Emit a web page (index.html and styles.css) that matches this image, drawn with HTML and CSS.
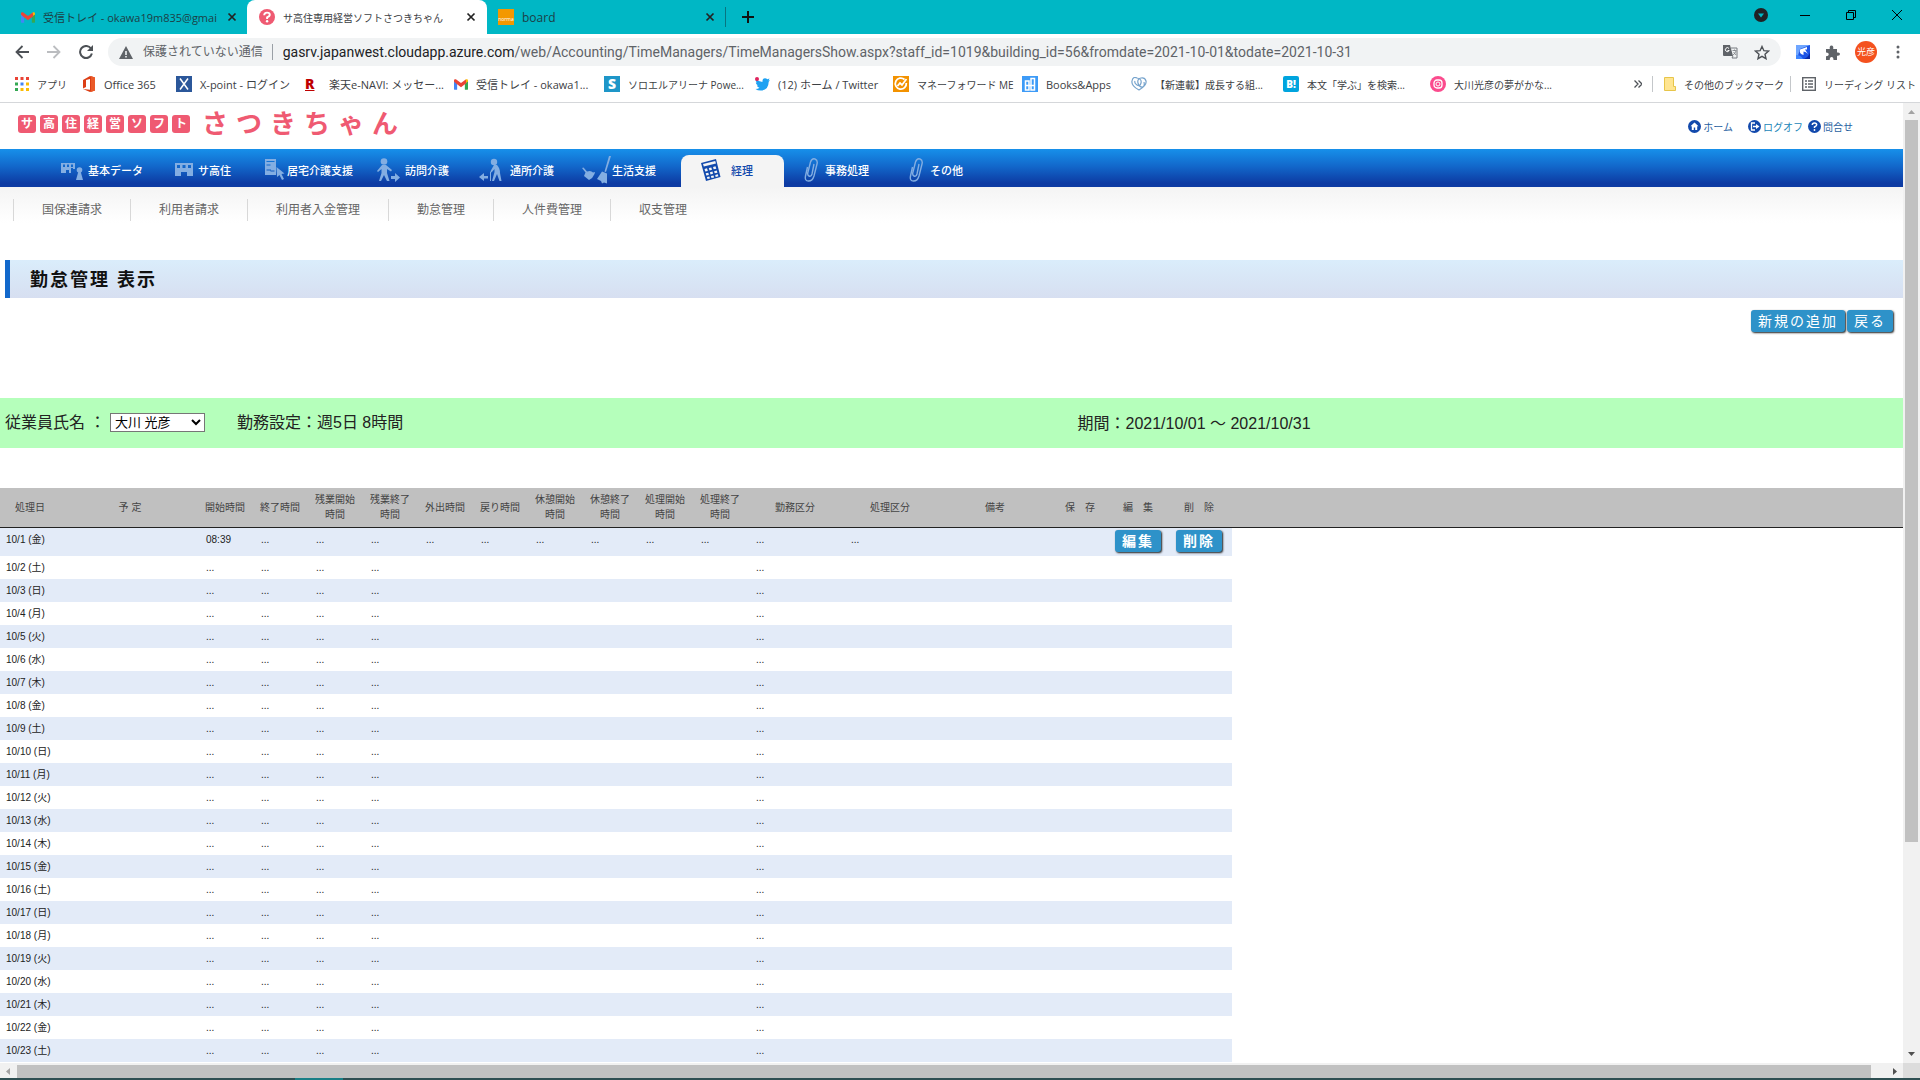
FILE: index.html
```html
<!DOCTYPE html>
<html lang="ja">
<head>
<meta charset="utf-8">
<title>サ高住専用経営ソフトさつきちゃん</title>
<link rel="stylesheet" href="styles.css">
</head>
<body>
<svg class="defs" width="0" height="0" aria-hidden="true">
  <defs>
    <symbol id="gmail" viewBox="0 0 16 12"><path d="M0 1.5V11a1 1 0 0 0 1 1h2.6V5z" fill="#4285f4"/><path d="M16 1.5V11a1 1 0 0 1-1 1h-2.6V5z" fill="#34a853"/><path d="M12.400 5V1l1-.7C14.600-.5 16 .2 16 1.500v1z" fill="#fbbc04"/><path d="M0 2.500v-1C0 .2 1.400-.5 2.600.3L8 4.300l5.400-4L14 4.500 8 9 2 4.500z" fill="#ea4335"/></symbol>
    <symbol id="cross" viewBox="0 0 10 10"><path d="M1.500 1.500l7 7m0-7l-7 7" stroke="currentColor" stroke-width="1.700" fill="none"/></symbol>
    <symbol id="building" viewBox="0 0 18 13"><path fill-rule="evenodd" d="M0 0h18v13h-6V9H6v4H0zM2 2v3h3V2zm5.500 0v3h3V2zM13 2v3h3V2z"/></symbol>
    <symbol id="clip" viewBox="0 0 14 24"><path d="M10 6L8 16q-1 3-3 2t-1-4L6.500 4q1.500-4 4.500-3 3 1 2 5l-3 12q-1.500 5-5.500 5T1.500 18L3.500 9" fill="none" stroke="currentColor" stroke-width="1.400"/></symbol>
  </defs>
</svg>

<header class="browser">
  <div class="tabs">
    <div class="tab"><svg width="14" height="11"><use href="#gmail"/></svg><span class="tab-title">受信トレイ - okawa19m835@gmai</span><button class="icon-btn" aria-label="タブを閉じる"><svg width="10" height="10"><use href="#cross"/></svg></button></div>
    <div class="tab tab-active"><svg width="16" height="16" viewBox="0 0 16 16"><circle cx="8" cy="8" r="8" fill="#ef5a72"/><path d="M5.200 6.200Q5.200 3.600 8 3.600t2.800 2.200Q10.800 7.300 8.100 8.300V10" fill="none" stroke="#fff" stroke-width="1.900"/><circle cx="8.100" cy="12.300" r="1.200" fill="#fff"/></svg><span class="tab-title kana">サ高住専用経営ソフトさつきちゃん</span><button class="icon-btn" aria-label="タブを閉じる"><svg width="10" height="10"><use href="#cross"/></svg></button></div>
    <div class="tab tab-last"><span class="norma">norma</span><span class="tab-title">board</span><button class="icon-btn" aria-label="タブを閉じる"><svg width="10" height="10"><use href="#cross"/></svg></button></div>
    <button class="icon-btn new-tab" aria-label="新しいタブ"><svg width="14" height="14" viewBox="0 0 14 14"><path d="M7 1v12M1 7h12" stroke="#111" stroke-width="2"/></svg></button>
    <div class="window-controls">
      <svg width="14" height="14" viewBox="0 0 14 14"><circle cx="7" cy="7" r="7" fill="#202124"/><path d="M4 5.500h6L7 9.500z" fill="#00b7c5"/></svg>
      <button class="icon-btn" aria-label="最小化"><svg width="10" height="10" viewBox="0 0 10 10"><path d="M0 5.500h10" stroke="#000"/></svg></button>
      <button class="icon-btn" aria-label="元に戻す"><svg width="10" height="10" viewBox="0 0 10 10"><path d="M.5 2.500h7v7h-7zM2.500 2.500v-2h7v7h-2" fill="none" stroke="#000"/></svg></button>
      <button class="icon-btn" aria-label="閉じる"><svg width="10" height="10" viewBox="0 0 10 10"><path d="M0 0l10 10M10 0L0 10" stroke="#000"/></svg></button>
    </div>
  </div>

  <div class="toolbar">
    <div class="nav-buttons">
      <button class="icon-btn" aria-label="戻る"><svg width="14" height="14" viewBox="0 0 14 14"><path d="M14 7H1.500M7.500 1L1.500 7l6 6" fill="none" stroke="#4d5156" stroke-width="1.800"/></svg></button>
      <button class="icon-btn" aria-label="進む"><svg width="14" height="14" viewBox="0 0 14 14"><path d="M0 7h12.500M6.500 1l6 6-6 6" fill="none" stroke="#bbbdc0" stroke-width="1.800"/></svg></button>
      <button class="icon-btn" aria-label="再読み込み"><svg width="14" height="14" viewBox="0 0 14 14"><path d="M12 3.500A6 6 0 1 0 12.900 8.500" fill="none" stroke="#4d5156" stroke-width="2"/><path d="M14 0v6H8z" fill="#4d5156"/></svg></button>
    </div>
    <div class="omnibox">
      <svg width="14" height="13" viewBox="0 0 14 13"><path fill-rule="evenodd" d="M7 0l7 13H0zM6.200 5v4h1.600V5zm0 5v1.600h1.600V10z" fill="#5f6368"/></svg>
      <span class="insecure">保護されていない通信</span>
      <span class="url"><b>gasrv.japanwest.cloudapp.azure.com</b>/web/Accounting/TimeManagers/TimeManagersShow.aspx?staff_id=1019&amp;building_id=56&amp;fromdate=2021-10-01&amp;todate=2021-10-31</span>
      <svg width="15" height="14" viewBox="0 0 15 14"><path d="M0 0h7l3 11H1q-1 0-1-1z" fill="#5f6368"/><path d="M8 3h6v10H9M9 13l1-2" fill="none" stroke="#777b80"/><path d="M9.500 5.500h4M11.500 4.500v1M13 6q-1 3-3 4M10.500 7l2.500 3" fill="none" stroke="#777b80" stroke-width=".8"/><path d="M6 3.500A2 2 0 1 0 6.200 5.500H4.500" fill="none" stroke="#fff"/></svg>
      <svg width="16" height="15" viewBox="0 0 16 15"><path d="M8 1.500l1.900 4.200 4.600.4L11 9.200l1 4.500-4-2.400-4 2.400 1-4.500L1.500 6.100l4.600-.4z" fill="none" stroke="#4d5156" stroke-width="1.400"/></svg>
    </div>
    <div class="extensions">
      <svg width="14" height="14" viewBox="0 0 14 14"><path d="M0 0h14v14H0z" fill="#1d55e6"/><path d="M0 0h14L4 4 1 14H0z" fill="#6fa6ff"/><path d="M0 10q5 0 7 4H0z" fill="#3f86ff"/><path d="M14 7v7H8q5-2 6-7z" fill="#0a2aa8"/><path d="M4 4.500L11 2v2.500H9L12 9q-2-2.500-4.500-2.500v3.500Q3 9 4 4.500z" fill="#fff"/></svg>
      <svg width="15" height="15" viewBox="0 0 15 15"><path d="M1 4h3.800q-.6-3.500 1.700-3.500T8.200 4H12v3.500q3-.5 3 1.600t-3 1.700V15H8.500q0-3-1.900-3t-1.900 3H1v-3.800q2.800 0 2.800-1.900T1 7.500z" fill="#5f6368"/></svg>
      <span class="avatar">光彦</span>
      <svg width="4" height="16" viewBox="0 0 4 16"><g fill="#5f6368"><circle cx="2" cy="3" r="1.500"/><circle cx="2" cy="8" r="1.500"/><circle cx="2" cy="13" r="1.500"/></g></svg>
    </div>
  </div>

  <nav class="bookmarks" aria-label="ブックマーク">
    <a href="#"><svg width="14" height="14" viewBox="0 0 14 14"><path d="M0 0h3v3H0zM5.500 0h3v3h-3zM11 0h3v3h-3z" fill="#ea4335"/><path d="M0 5.500h3v3H0z" fill="#34a853"/><path d="M5.500 5.500h3v3h-3z" fill="#4285f4"/><path d="M11 5.500h3v3h-3zM5.500 11h3v3h-3zM11 11h3v3h-3z" fill="#fbbc04"/><path d="M0 11h3v3H0z" fill="#34a853"/></svg><span class="kana">アプリ</span></a>
    <a href="#"><svg width="14" height="16" viewBox="0 0 14 16"><path fill-rule="evenodd" d="M1 4l7-4 5 1.500v13L8 16l-7-3 7 .7V3L4 4v7l-3 1.500z" fill="#dc3e15"/><path d="M9 0l4 1.500v13L9 16z" fill="#ea5a28"/></svg><span>Office 365</span></a>
    <a href="#"><svg width="16" height="16" viewBox="0 0 16 16"><path d="M0 0h16v16H0z" fill="#2b579a"/><path d="M4 2.500l8 11M12 2.500l-8 11" stroke="#fff" stroke-width="1.500"/></svg><span>X-point - ログイン</span></a>
    <a href="#"><span class="rakuten">R</span><span>楽天e-NAVI: メッセー...</span></a>
    <a href="#"><svg width="14" height="11"><use href="#gmail"/></svg><span>受信トレイ - okawa1...</span></a>
    <a href="#"><span class="glyph glyph-s">S</span><span class="kana">ソロエルアリーナ Powe...</span></a>
    <a href="#"><svg width="15" height="14" viewBox="0 0 15 14"><path d="M1 2q3 3 6.500 3Q7 1.500 10 1.300q1.500 0 2.300.9L14.500 1.500 13.500 3.500 15 3.200 13.700 4.800Q13.500 13.500 5.500 13.500 2.500 13.500.5 12q2.500 0 4-1.200Q2.500 10.500 1.800 8.600h1.200Q.8 7.500.8 5.200l1.300.4Q0 3.800 1 2z" fill="#1da1f2"/><circle cx="2" cy="2" r="2" fill="#e0245e"/></svg><span>(12) ホーム / Twitter</span></a>
    <a href="#"><svg width="16" height="16" viewBox="0 0 16 16"><path d="M0 0h16v16H0z" fill="#f39200"/><path d="M11.500 3.500A5.500 5.500 0 1 0 13.300 7M4.500 10l2.500-3 2 2L13.500 3" fill="none" stroke="#fff" stroke-width="1.800"/></svg><span class="kana">マネーフォワード ME</span></a>
    <a href="#"><svg width="16" height="16" viewBox="0 0 16 16"><path d="M0 0h16v16H0z" fill="#3d9bf7"/><path d="M3.500 14V5H7v9zM9 14V2.500h3.500V14zM3.500 9.500h9" fill="none" stroke="#fff" stroke-width="1.500"/></svg><span>Books&amp;Apps</span></a>
    <a href="#"><svg width="16" height="14" viewBox="0 0 16 14"><path d="M8 13Q0 9 1 4T6 1q5 1 4 5T6 8 4 4M8 13q8-5 7-9t-5-3-3 5 4 4 2-5" fill="none" stroke="#76a3cc" stroke-width="1.200"/></svg><span class="kana">【新連載】成長する組...</span></a>
    <a href="#"><span class="glyph glyph-b">B!</span><span class="kana">本文「学ぶ」を検索...</span></a>
    <a href="#"><svg width="16" height="16" viewBox="0 0 16 16"><circle cx="8" cy="8" r="8" fill="#fb4b8d"/><rect x="4" y="4" width="8" height="8" rx="3" fill="none" stroke="#fff" stroke-width="1.300"/><circle cx="8" cy="8" r="2" fill="none" stroke="#fff"/></svg><span class="kana">大川光彦の夢がかな...</span></a>
    <button class="icon-btn more" aria-label="その他のブックマークを表示"><svg width="8" height="8" viewBox="0 0 8 8"><path d="M.5.500L4 4 .5 7.500M4.500.500L8 4 4.500 7.500" fill="none" stroke="#4d5156" stroke-width="1.300"/></svg></button>
    <a href="#" class="ruled"><svg width="12" height="14" viewBox="0 0 12 14"><path d="M.5.500h9v9h2v4H.5z" fill="#ffe591" stroke="#e7c54a"/></svg><span class="kana">その他のブックマーク</span></a>
    <a href="#" class="ruled"><svg width="14" height="14" viewBox="0 0 14 14"><rect x=".7" y=".7" width="12.600" height="12.600" fill="none" stroke="#5f6368" stroke-width="1.400"/><path d="M3 4h2M3 7h2M3 10h2M6 4h5M6 7h5M6 10h5" stroke="#5f6368" stroke-width="1.300"/></svg><span class="kana">リーディング リスト</span></a>
  </nav>
</header>

<div class="viewport">
  <div class="page">
    <div class="masthead">
      <a href="#" class="logo">
        <span class="tiles"><i>サ</i><i>高</i><i>住</i><i>経</i><i>営</i><i>ソ</i><i>フ</i><i>ト</i></span>
        <span class="brand"><i>さ</i><i>つ</i><i>き</i><i>ち</i><i>ゃ</i><i>ん</i></span>
      </a>
      <nav class="utility" aria-label="ユーティリティ">
        <a href="#"><svg width="13" height="13" viewBox="0 0 13 13"><circle cx="6.500" cy="6.500" r="6.500" fill="#1249ac"/><path d="M6.500 2.500L2.500 6.300h1.300V10h2V7.500h1.400V10h2V6.300h1.300z" fill="#fff"/></svg>ホーム</a>
        <a href="#" class="logoff"><svg width="13" height="13" viewBox="0 0 13 13"><circle cx="6.500" cy="6.500" r="6.500" fill="#1249ac"/><path d="M7 3H3.500v7H7" fill="none" stroke="#fff" stroke-width="1.300"/><path d="M5 5.700h3V4l3.500 2.500L8 9V7.300H5z" fill="#fff"/></svg>ログオフ</a>
        <a href="#"><svg width="13" height="13" viewBox="0 0 13 13"><circle cx="6.500" cy="6.500" r="6.500" fill="#1249ac"/><path d="M4.300 5q0-2 2.200-2t2.200 1.800Q8.700 6 6.500 6.900v1.200" fill="none" stroke="#fff" stroke-width="1.500"/><circle cx="6.500" cy="10" r=".9" fill="#fff"/></svg>問合せ</a>
      </nav>
    </div>

    <nav class="mainnav" aria-label="メインメニュー">
      <a href="#"><svg width="27" height="24" viewBox="0 0 27 24"><path fill-rule="evenodd" d="M0 5h14v6l-2 0v-1h-2v5H8v-3H5v3H0zM2 6.500v2.500h2V6.500zm4 0v2.500h2V6.500zm4 0v2.500h2V6.500z"/><circle cx="18.500" cy="12" r="2.800"/><path d="M17.500 13h2l2.500 9h-7z"/></svg>基本データ</a>
      <a href="#"><svg width="23" height="14" viewBox="0 0 23 14"><svg width="18" height="13"><use href="#building"/></svg></svg>サ高住</a>
      <a href="#"><svg width="22" height="24" viewBox="0 0 22 24"><path fill-rule="evenodd" d="M0 1h11v16H0zM1.500 3v1h8V3zm0 3.500v1h4v-1zm0 5v1h4v1h4v-1H6v-1z"/><path d="M11.500 9l8 6.500-3 .5 2.500 5-2 1-2.500-5-2.500 2z"/></svg>居宅介護支援</a>
      <a href="#"><svg width="28" height="24" viewBox="0 0 28 24"><circle cx="7" cy="3.500" r="3.300"/><path d="M5 7h4l6 5-1 1.500-4-2.500v4l2.500 8H10l-3-6-3 6H2l2.500-8v-4L1 14l-1-1zM14 18h4v-3l5 4.500-5 4.500v-3h-4z"/></svg>訪問介護</a>
      <a href="#"><svg width="31" height="24" viewBox="0 0 31 24"><circle cx="15" cy="4" r="3.200"/><path d="M15 7h3q3 3 3 8l1.500 8h-2L18 16l-3 7h-2l2.500-9v-3l-3 3.500-1.200-1zM11 14h1v9h-1zM0 19l5-4v3h4v2.500H5V23z"/></svg>通所介護</a>
      <a href="#"><svg width="30" height="28" viewBox="0 0 30 28"><path d="M0 12l1.500-.5 3.500 4q4-1.500 6 1l2-.5-.5 2q-1.500 4-5.500 6l-5-4 1.500-3.500zM27 0h2l-5 16-1.500-.5zM20 15.500l5 2 0 10-3-1-2 1-1-2.500-4-2z"/></svg>生活支援</a>
      <a href="#" class="current" aria-current="page"><svg width="30" height="22" viewBox="0 0 30 22"><path fill-rule="evenodd" d="M0 4L15 0l4.500 18L5 22zM2 5l.8 2.500L15 4.500 14.200 2zm1.500 5l.8 2.500 2.500-.6L6 9.300zm4.300-1l.7 2.400 2.500-.6-.7-2.400zm4.200-1.100l.7 2.400 2.600-.6-.8-2.500zM4.700 14.300l.6 2.200 2.600-.6-.6-2.200zm4.200-1.100l.6 2.200 2.500-.6-.5-2.200zm4.200-1l.6 2.100 2.700-.6-.6-2.200zM5.900 18l.6 2 2.400-.6-.5-2zm4-1l.6 2 2.600-.6-.6-2zm4.300-1.100l.5 2 2.700-.6-.6-2.100z"/></svg>経理</a>
      <a href="#"><svg width="21" height="24" viewBox="0 0 21 24"><svg width="14" height="24"><use href="#clip"/></svg></svg>事務処理</a>
      <a href="#"><svg width="21" height="24" viewBox="0 0 21 24"><svg width="14" height="24"><use href="#clip"/></svg></svg>その他</a>
    </nav>

    <nav class="subnav" aria-label="経理メニュー">
      <a href="#">国保連請求</a><a href="#">利用者請求</a><a href="#">利用者入金管理</a><a href="#">勤怠管理</a><a href="#">人件費管理</a><a href="#">収支管理</a>
    </nav>

    <main>
      <h1>勤怠管理 表示</h1>
      <div class="actions"><button class="btn">新規の追加</button><button class="btn">戻る</button></div>
      <div class="filter">
        <label for="staff">従業員氏名 ：</label>
        <select id="staff"><option>大川 光彦</option></select>
        <span class="setting">勤務設定：週5日 8時間</span>
        <span class="period">期間：2021/10/01 ～ 2021/10/31</span>
      </div>

      <table>
        <colgroup><col class="c-date"><col class="c-plan"><col span="10" class="c-time"><col span="2" class="c-kind"><col class="c-note"><col class="c-time"><col span="2" class="c-button"><col></colgroup>
        <thead>
          <tr><th>処理日</th><th>予 定</th><th>開始時間</th><th>終了時間</th><th>残業開始時間</th><th>残業終了時間</th><th>外出時間</th><th>戻り時間</th><th>休憩開始時間</th><th>休憩終了時間</th><th>処理開始時間</th><th>処理終了時間</th><th>勤務区分</th><th>処理区分</th><th>備考</th><th>保　存</th><th>編　集</th><th>削　除</th><th></th></tr>
        </thead>
        <tbody>
          <tr class="first"><td>10/1 (金)</td><td></td><td>08:39</td><td>...</td><td>...</td><td>...</td><td>...</td><td>...</td><td>...</td><td>...</td><td>...</td><td>...</td><td>...</td><td>...</td><td></td><td></td><td class="cell-btn"><button class="btn btn-bold">編集</button></td><td class="cell-btn"><button class="btn btn-bold">削除</button></td></tr>
          <tr><td>10/2 (土)</td><td></td><td>...</td><td>...</td><td>...</td><td>...</td><td colspan="6"></td><td>...</td><td colspan="5"></td></tr>
          <tr><td>10/3 (日)</td><td></td><td>...</td><td>...</td><td>...</td><td>...</td><td colspan="6"></td><td>...</td><td colspan="5"></td></tr>
          <tr><td>10/4 (月)</td><td></td><td>...</td><td>...</td><td>...</td><td>...</td><td colspan="6"></td><td>...</td><td colspan="5"></td></tr>
          <tr><td>10/5 (火)</td><td></td><td>...</td><td>...</td><td>...</td><td>...</td><td colspan="6"></td><td>...</td><td colspan="5"></td></tr>
          <tr><td>10/6 (水)</td><td></td><td>...</td><td>...</td><td>...</td><td>...</td><td colspan="6"></td><td>...</td><td colspan="5"></td></tr>
          <tr><td>10/7 (木)</td><td></td><td>...</td><td>...</td><td>...</td><td>...</td><td colspan="6"></td><td>...</td><td colspan="5"></td></tr>
          <tr><td>10/8 (金)</td><td></td><td>...</td><td>...</td><td>...</td><td>...</td><td colspan="6"></td><td>...</td><td colspan="5"></td></tr>
          <tr><td>10/9 (土)</td><td></td><td>...</td><td>...</td><td>...</td><td>...</td><td colspan="6"></td><td>...</td><td colspan="5"></td></tr>
          <tr><td>10/10 (日)</td><td></td><td>...</td><td>...</td><td>...</td><td>...</td><td colspan="6"></td><td>...</td><td colspan="5"></td></tr>
          <tr><td>10/11 (月)</td><td></td><td>...</td><td>...</td><td>...</td><td>...</td><td colspan="6"></td><td>...</td><td colspan="5"></td></tr>
          <tr><td>10/12 (火)</td><td></td><td>...</td><td>...</td><td>...</td><td>...</td><td colspan="6"></td><td>...</td><td colspan="5"></td></tr>
          <tr><td>10/13 (水)</td><td></td><td>...</td><td>...</td><td>...</td><td>...</td><td colspan="6"></td><td>...</td><td colspan="5"></td></tr>
          <tr><td>10/14 (木)</td><td></td><td>...</td><td>...</td><td>...</td><td>...</td><td colspan="6"></td><td>...</td><td colspan="5"></td></tr>
          <tr><td>10/15 (金)</td><td></td><td>...</td><td>...</td><td>...</td><td>...</td><td colspan="6"></td><td>...</td><td colspan="5"></td></tr>
          <tr><td>10/16 (土)</td><td></td><td>...</td><td>...</td><td>...</td><td>...</td><td colspan="6"></td><td>...</td><td colspan="5"></td></tr>
          <tr><td>10/17 (日)</td><td></td><td>...</td><td>...</td><td>...</td><td>...</td><td colspan="6"></td><td>...</td><td colspan="5"></td></tr>
          <tr><td>10/18 (月)</td><td></td><td>...</td><td>...</td><td>...</td><td>...</td><td colspan="6"></td><td>...</td><td colspan="5"></td></tr>
          <tr><td>10/19 (火)</td><td></td><td>...</td><td>...</td><td>...</td><td>...</td><td colspan="6"></td><td>...</td><td colspan="5"></td></tr>
          <tr><td>10/20 (水)</td><td></td><td>...</td><td>...</td><td>...</td><td>...</td><td colspan="6"></td><td>...</td><td colspan="5"></td></tr>
          <tr><td>10/21 (木)</td><td></td><td>...</td><td>...</td><td>...</td><td>...</td><td colspan="6"></td><td>...</td><td colspan="5"></td></tr>
          <tr><td>10/22 (金)</td><td></td><td>...</td><td>...</td><td>...</td><td>...</td><td colspan="6"></td><td>...</td><td colspan="5"></td></tr>
          <tr><td>10/23 (土)</td><td></td><td>...</td><td>...</td><td>...</td><td>...</td><td colspan="6"></td><td>...</td><td colspan="5"></td></tr>
        </tbody>
      </table>
    </main>
  </div>
  <div class="vscroll" aria-hidden="true">
    <svg width="17" height="17" viewBox="0 0 17 17"><path d="M5 11h7L8.500 7z" fill="#a3a3a3"/></svg>
    <div class="vtrack"><div class="vthumb"></div></div>
    <svg width="17" height="17" viewBox="0 0 17 17"><path d="M5 6h7l-3.500 4z" fill="#505050"/></svg>
  </div>
</div>
<div class="hscroll" aria-hidden="true">
  <svg width="17" height="15" viewBox="0 0 17 15"><path d="M10 5v7L6 8.500z" fill="#a3a3a3"/></svg>
  <div class="htrack"><div class="hthumb"></div></div>
  <svg width="17" height="15" viewBox="0 0 17 15"><path d="M7 5v7l4-3.500z" fill="#505050"/></svg>
  <div class="corner"></div>
</div>
<div class="taskbar"></div>
</body>
</html>
```
FILE: styles.css
```css
* { box-sizing: border-box; }
body {
  margin: 0;
  min-height: 100vh;
  display: flex;
  flex-direction: column;
  background: #fff;
  color: #222;
  font-family: "Liberation Sans", "Noto Sans CJK JP", sans-serif;
}
a { color: inherit; text-decoration: none; }
svg { flex: none; display: block; }
i { font-style: normal; }
.defs { position: absolute; }
.icon-btn { padding: 0; border: 0; background: none; color: inherit; flex: none; }

/* Browser chrome */
.browser {
  font-family: "Open Sans", "Noto Sans CJK JP", sans-serif;
  font-size: 12px;
  color: #3c4043;
  border-bottom: 1px solid #d5d7da;
}
.tabs { display: flex; height: 34px; background: #00b7c5; }
.tab {
  display: flex;
  align-items: center;
  gap: 8px;
  width: 247px;
  padding: 0 10px 0 21px;
  color: #1d4045;
  font-size: 11px;
}
.tab-active {
  width: 240px;
  padding: 0 11px 0 12px;
  background: #fff;
  border-radius: 8px 8px 0 0;
  color: #3c4043;
}
.tab-last {
  width: 239px;
  height: 20px;
  margin-top: 7px;
  padding-left: 11px;
  border-right: 1px solid #087580;
  font-size: 12px;
}
.tab-title { flex: 1; min-width: 0; white-space: nowrap; }
.tab .icon-btn { color: #222; }
.norma {
  width: 16px;
  height: 16px;
  padding-top: 7px;
  background: #f39800;
  color: #fff;
  font-size: 5px;
  line-height: 6px;
  text-align: center;
}
.kana { font-size: 10px; }
.new-tab { margin-left: 15px; }
.window-controls {
  display: flex;
  align-items: center;
  gap: 36px;
  height: 30px;
  margin-left: auto;
  padding-right: 18px;
}
.window-controls > svg { margin-right: -4px; }

.toolbar { display: flex; align-items: center; height: 36px; padding-right: 20px; }
.nav-buttons { display: flex; gap: 18px; padding: 0 15px; }
.omnibox {
  flex: 1;
  display: flex;
  align-items: center;
  gap: 10px;
  height: 28px;
  padding: 0 11px;
  border-radius: 14px;
  background: #f1f3f4;
  color: #5f6368;
}
.omnibox svg + svg { margin-left: 6px; }
.insecure { padding-right: 9px; border-right: 1px solid #9aa0a6; line-height: 16px; white-space: nowrap; }
.url { flex: 1; font-family: Roboto, sans-serif; font-size: 14px; white-space: nowrap; overflow: hidden; }
.url b { font-weight: 400; color: #202124; }
.extensions { display: flex; align-items: center; gap: 15px; padding-left: 15px; }
.avatar {
  width: 22px;
  height: 22px;
  margin-right: 4px;
  border-radius: 50%;
  background: #f4511e;
  color: #fff;
  font-size: 9px;
  line-height: 22px;
  text-align: center;
}

.bookmarks {
  display: grid;
  grid-template-columns: 67px 94px 129px 149px 150px 151px 138px 129px 109px 152px 147px 1fr 18px 138px 130px;
  align-items: center;
  height: 32px;
  padding: 0 0 4px 15px;
}
.bookmarks a { display: flex; align-items: center; gap: 8px; white-space: nowrap; }
.bookmarks a > span:last-child { font-size: 11px; }
.bookmarks a > .kana:last-child { font-size: 10px; }
.bookmarks .ruled { border-left: 1px solid #c4c7ca; height: 16px; padding-left: 11px; }
.rakuten { width: 16px; color: #bf0000; font-weight: 800; font-size: 14px; line-height: 16px; text-decoration: underline; }
.glyph { width: 16px; height: 16px; color: #fff; font-weight: 800; text-align: center; line-height: 16px; }
.glyph-s { background: #1e96c8; font-size: 14px; }
.glyph-b { background: #00a4de; font-size: 10px; border-radius: 2px; }

/* Page area */
.viewport { flex: 1; display: flex; }
.page { flex: 1; min-width: 0; }
.masthead { display: flex; justify-content: space-between; height: 46px; padding: 0 50px 0 18px; }
.logo { display: flex; align-items: center; gap: 12px; height: 42px; color: #ef5a72; }
.tiles { display: flex; gap: 4px; }
.tiles i {
  width: 18px;
  height: 18px;
  border-radius: 3px;
  background: #ef5a72;
  color: #fff;
  font-size: 12px;
  font-weight: 700;
  line-height: 18px;
  text-align: center;
}
.brand { display: flex; gap: 8px; font-size: 26px; line-height: 26px; font-weight: 700; }
.utility { display: flex; align-items: center; gap: 5px; height: 46px; font-size: 10px; color: #1f5f9f; }
.utility a { display: flex; align-items: center; gap: 2px; }
.utility .logoff { margin-left: 10px; color: #1a86b8; }

.mainnav {
  display: grid;
  grid-template-columns: 114px 90px 112px 102px 103px 99px 123px 105px auto;
  justify-content: start;
  height: 38px;
  padding-left: 61px;
  background: linear-gradient(#1790ea, #1268cb 45%, #0d3ba3 90%);
  color: #fff;
  font-size: 11px;
  font-weight: 500;
}
.mainnav a { display: flex; align-items: center; padding-top: 4px; white-space: nowrap; }
.mainnav svg { fill: #83aee2; color: #83aee2; }
.mainnav .current {
  margin: 6px 20px 0 0;
  padding: 0 0 2px 20px;
  border-radius: 8px 8px 0 0;
  background: #f4f4f4;
  color: #1249ac;
}
.mainnav .current svg { fill: #1249ac; }

.subnav {
  display: flex;
  align-items: center;
  height: 45px;
  padding-left: 13px;
  background: linear-gradient(#f4f4f4, #fff 80%);
  color: #666;
  font-size: 12px;
}
.subnav a { padding: 0 28px; border-left: 1px solid #d8d8d8; line-height: 22px; }

h1 {
  margin: 28px 0 0 5px;
  padding: 2px 0 0 20px;
  border-left: 5px solid #1268cb;
  background: linear-gradient(#daedfb, #d7dff1);
  color: #111;
  font-size: 18px;
  line-height: 36px;
  letter-spacing: 2px;
}
.actions { display: flex; justify-content: flex-end; gap: 2px; height: 100px; padding: 12px 10px 0 0; }
.btn {
  height: 22px;
  padding: 0 7px;
  border: 0;
  border-radius: 3px;
  background: #2e92c9;
  box-shadow: 1px 1px 2px #222;
  color: #fff;
  font-family: inherit;
  font-size: 14px;
  line-height: 22px;
  letter-spacing: 2px;
  white-space: nowrap;
}
.btn-bold { font-weight: 700; }

.filter {
  display: flex;
  align-items: center;
  height: 50px;
  padding: 0 5px 2px;
  background: #b5ffbb;
  font-size: 16px;
  white-space: nowrap;
}
.filter label { width: 105px; padding-bottom: 3px; }
.filter select {
  width: 95px;
  height: 19px;
  padding: 0;
  border: 1px solid #767676;
  border-radius: 0;
  background: #fff;
  color: #000;
  font-family: inherit;
  font-size: 13px;
  line-height: 17px;
}
.setting { flex: 1; padding: 0 0 3px 32px; }
.period { flex: 1; padding-left: 20px; }

table { width: 100%; margin-top: 40px; border-collapse: collapse; table-layout: fixed; font-size: 10px; }
.c-date { width: 65px; }
.c-plan { width: 135px; }
.c-time { width: 55px; }
.c-kind { width: 95px; }
.c-note { width: 115px; }
.c-button { width: 61px; }
th {
  height: 39px;
  padding: 0 10px 0 5px;
  border-bottom: 1px solid #222;
  background: #c0c0c0;
  color: #444;
  font-weight: 400;
  line-height: 15px;
}
td { height: 23px; padding: 6px 9px 6px 6px; line-height: 11px; vertical-align: top; }
tbody tr:nth-child(odd) td { background: #e3ebf8; }
.first td { height: 29px; }
.first .cell-btn { padding: 2px 5px; }

/* Scrollbars */
.vscroll { display: flex; flex-direction: column; width: 17px; background: #f1f1f1; }
.vtrack { flex: 1; padding: 0 2px; }
.vthumb { height: 78%; background: #c1c1c1; }
.hscroll { display: flex; height: 15px; background: #f1f1f1; }
.htrack { flex: 1; padding: 2px 15px 0 0; }
.hthumb { height: 13px; background: #c1c1c1; }
.corner { width: 17px; background: #dcdcdc; }
.taskbar { height: 2px; background: linear-gradient(90deg, #2f4f52 295px, #1a7f86 295px 343px, #2f4f52 343px); }
```
